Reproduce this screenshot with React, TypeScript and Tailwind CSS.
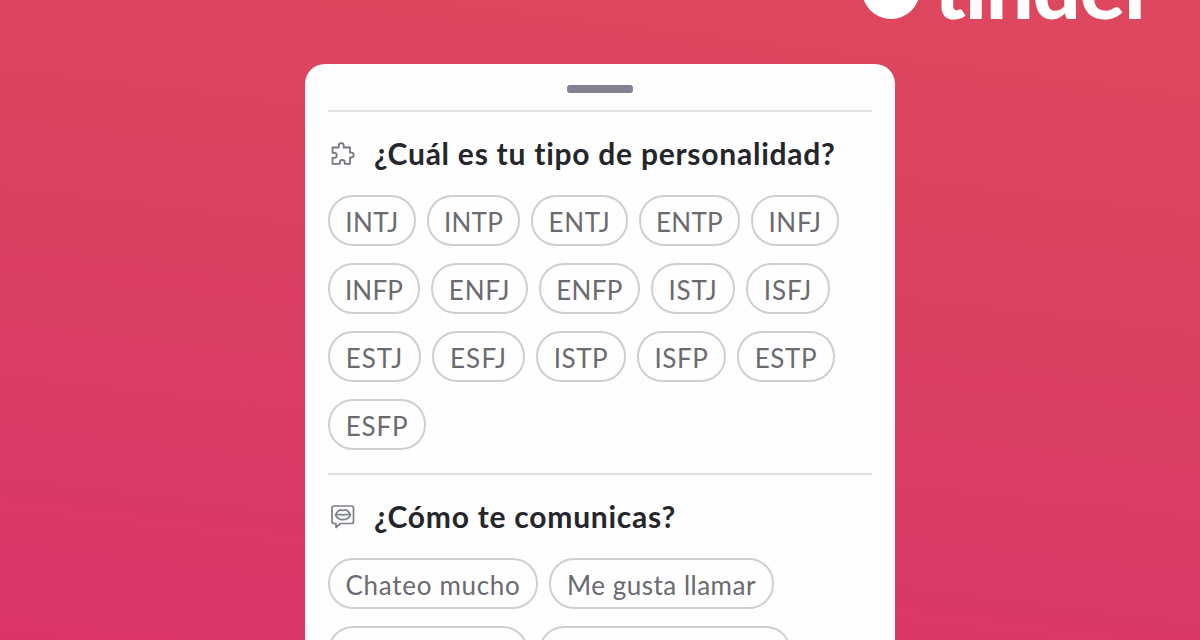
import clsx from 'clsx'

const personality = [
    [
        { label: 'INTJ', size: 'w-[88px] tracking-[0.4px]' },
        { label: 'INTP', size: 'w-[93px] tracking-[0.2px]' },
        { label: 'ENTJ', size: 'w-[97px] tracking-[0.6px]' },
        { label: 'ENTP', size: 'w-[101px] tracking-[0.3px]' },
        { label: 'INFJ', size: 'w-[88px] tracking-[0.7px]' },
    ],
    [
        { label: 'INFP', size: 'w-[92px] tracking-[0.2px]' },
        { label: 'ENFJ', size: 'w-[97px] tracking-[0.8px]' },
        { label: 'ENFP', size: 'w-[101px] tracking-[0.3px]' },
        { label: 'ISTJ', size: 'w-[84px] tracking-[0.8px]' },
        { label: 'ISFJ', size: 'w-[84px] tracking-[1px]' },
    ],
    [
        { label: 'ESTJ', size: 'w-[93px] tracking-[1px]' },
        { label: 'ESFJ', size: 'w-[93px] tracking-[1.2px]' },
        { label: 'ISTP', size: 'w-[90px] tracking-[0.5px]' },
        { label: 'ISFP', size: 'w-[89px] tracking-[0.6px]' },
        { label: 'ESTP', size: 'w-[98px] tracking-[0.6px]' },
    ],
    [{ label: 'ESFP', size: 'w-[98px] tracking-[0.8px]' }],
]

const communication = [
    [
        { label: 'Chateo mucho', size: 'w-[210px] tracking-[0.7px]' },
        { label: 'Me gusta llamar', size: 'w-[225px] tracking-[0.5px]' },
    ],
    [
        { label: '', size: 'w-[200px]' },
        { label: '', size: 'w-[252px]' },
    ],
]

type ChipData = { label: string; size: string }

function Chips({ rows }: { rows: ChipData[][] }) {
    return (
        <div className="flex flex-col gap-[17px]">
            {rows.map((row, i) => (
                <div key={i} className="flex gap-[11px]">
                    {row.map((chip, j) => (
                        <button
                            key={j}
                            className={clsx(
                                'h-[51px] shrink-0 rounded-[25px] border-2 border-[#cfcfd1] pt-[3px] text-center text-[26px] leading-[44px] whitespace-nowrap text-[#6a6a70]',
                                chip.size
                            )}
                        >
                            {chip.label}
                        </button>
                    ))}
                </div>
            ))}
        </div>
    )
}

function PuzzleIcon() {
    return (
        <svg
            className="h-7 w-7"
            viewBox="0 0 28 28"
            fill="none"
            stroke="#77777f"
            strokeWidth="1.8"
            strokeLinejoin="round"
        >
            <path d="M3.500 7.500H9.800V5.600a2.500 2.500 0 0 1 5 0V7.500H21v5.200h1.300a2.400 2.400 0 0 1 0 4.800H21v6.300h-5.300v-1.500a2.400 2.400 0 0 0-4.800 0v1.500H3.500v-6h1.800a2.500 2.500 0 0 0 0-5H3.500z" />
        </svg>
    )
}

function LipsIcon() {
    return (
        <svg
            className="h-7 w-7"
            viewBox="0 0 28 28"
            fill="none"
            stroke="#7b7f86"
            strokeWidth="1.7"
            strokeLinejoin="round"
            strokeLinecap="round"
        >
            <path d="M5 3h17.500a2 2 0 0 1 2 2v13.500a2 2 0 0 1-2 2H11.500L7 24.500v-4H5a2 2 0 0 1-2-2V5a2 2 0 0 1 2-2z" />
            <path d="M6.500 11.800c1.600-2.800 3.700-4.900 5.500-4.900.8 0 1.200.6 2 .6s1.200-.6 2-.6c1.800 0 3.900 2.100 5.500 4.900-1.600 3.300-4.300 4.900-7.500 4.900s-5.900-1.600-7.500-4.900z" />
            <path d="M7 11.800c2.500-.7 4.500 0 7 0s4.500-.7 7 0" />
        </svg>
    )
}

function SectionTitle({
    icon,
    children,
}: {
    icon: React.ReactNode
    children: React.ReactNode
}) {
    return (
        <div className="mb-6 ml-px flex h-[34px] items-center">
            {icon}
            <h2 className="ml-[17px] pb-[3px] text-[30px] leading-8 font-bold tracking-[0.75px] whitespace-nowrap text-[#25262c]">
                {children}
            </h2>
        </div>
    )
}

export default function App() {
    return (
        <div className="relative flex h-[640px] w-[1200px] justify-center overflow-hidden bg-[linear-gradient(187deg,#de485e_0%,#da4060_42%,#d93c66_68%,#db346b_100%)] pt-16 font-['Lato',sans-serif]">
            <div className="absolute top-0 left-[862px] h-8 w-[300px] overflow-hidden">
                <div className="absolute -top-[39px] left-0 h-[58px] w-[58px] rounded-full bg-white" />
                <span className="absolute -top-[63px] left-[72px] text-[84px] leading-[100px] font-black tracking-[-0.8px] text-white [font-variant-ligatures:none]">
                    tinder
                </span>
            </div>

            <main className="h-[600px] w-[590px] rounded-t-[20px] bg-[#fefefe] px-[23px]">
                <div className="flex h-[46px] justify-center pt-[21px]">
                    <div className="h-2 w-[66px] rounded-[3px] bg-[#83808f]" />
                </div>

                <section className="border-t-2 border-[#e2e2e4] pt-[25px]">
                    <SectionTitle icon={<PuzzleIcon />}>
                        ¿Cuál es tu tipo de personalidad?
                    </SectionTitle>
                    <Chips rows={personality} />
                </section>

                <section className="mt-[23px] border-t-2 border-[#e2e2e4] pt-[25px]">
                    <SectionTitle icon={<LipsIcon />}>
                        ¿Cómo te comunicas?
                    </SectionTitle>
                    <Chips rows={communication} />
                </section>
            </main>
        </div>
    )
}
